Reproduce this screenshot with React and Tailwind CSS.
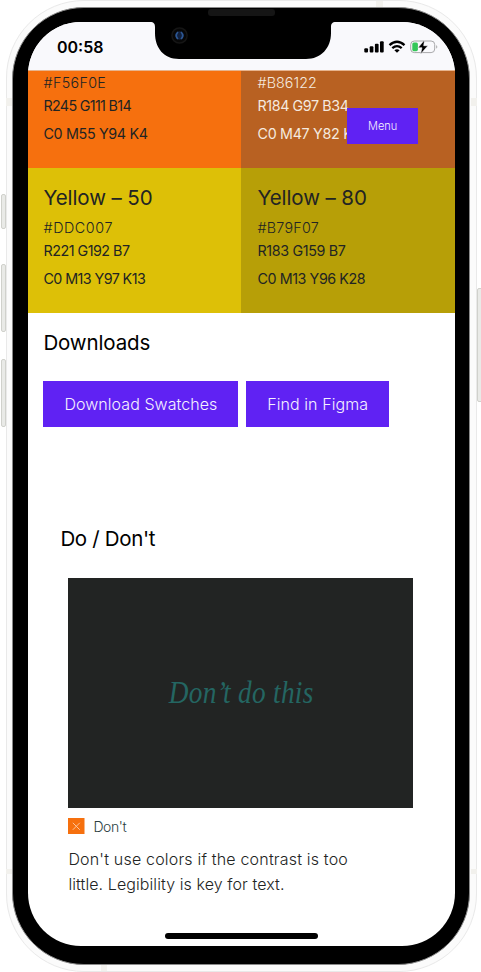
import { useLayoutEffect, useRef } from "react";

// Single line of text whose tracking is adjusted to fill a given width.
function Line({ w, className = "", children }) {
  const ref = useRef(null);
  useLayoutEffect(() => {
    const el = ref.current;
    el.style.letterSpacing = "0px";
    const natural = el.offsetWidth;
    el.style.letterSpacing = `${(w - natural) / (children.length - 1 || 1)}px`;
  }, [w, children]);
  return (
    <div className={`flex items-center whitespace-pre ${className}`}>
      <span ref={ref}>{children}</span>
    </div>
  );
}

function Swatch({ title, hex, rgb, cmyk, className }) {
  return (
    <div className={`flex flex-col overflow-hidden ${className}`}>
      {title && (
        <Line w={title[1]} className="mt-[18px] h-6 text-[20.5px]">
          {title[0]}
        </Line>
      )}
      <Line w={hex[1]} className={`h-5 text-[14.3px] font-light ${title ? "mt-2" : "mt-[2px]"}`}>
        {hex[0]}
      </Line>
      <Line w={rgb[1]} className="mt-[3px] h-5 text-[14.3px]">
        {rgb[0]}
      </Line>
      <Line w={cmyk[1]} className="mt-2 h-5 text-[14.3px]">
        {cmyk[0]}
      </Line>
    </div>
  );
}

function StatusBar() {
  return (
    <div className="relative flex h-12 w-full shrink-0 items-center bg-[#f9f9fc] text-black">
      <Line w={47} className="ml-[29px] mt-[1px] h-6 text-[16px] font-semibold">
        00:58
      </Line>
      <svg className="absolute left-[122px] top-0" width="186" height="38" viewBox="0 0 186 38">
        <path d="M0 0C4 0 5 2 5 5V11C5 26 14 37 29 37H156C171 37 181 26 181 11V5C181 2 182 0 186 0Z" fill="#000" />
        <circle cx="29.5" cy="13.5" r="7.6" fill="#070707" stroke="#151515" strokeWidth="1.5" />
        <circle cx="29.5" cy="13.5" r="4.2" fill="#11203d" />
        <path d="M28 10Q24.5 13.5 28 17M31 10Q34.5 13.5 31 17" stroke="#2d5793" strokeWidth="1.6" fill="none" />
      </svg>
      <svg className="ml-auto mr-[16px] mt-[1px]" width="75" height="16" viewBox="0 0 75 16">
        <g fill="#000">
          <rect x="0.3" y="9.3" width="3.7" height="4.3" rx="1" />
          <rect x="5.7" y="7.2" width="3.7" height="6.4" rx="1" />
          <rect x="10.9" y="4.8" width="3.7" height="8.8" rx="1" />
          <rect x="16" y="2.2" width="3.7" height="11.4" rx="1" />
        </g>
        <g fill="none" stroke="#000" strokeWidth="2.3">
          <path d="M25.5 6.2Q33 -0.6 40.5 6.2" />
          <path d="M28.3 9.2Q33 5 37.7 9.2" />
        </g>
        <path d="M30.4 11.2Q33 9.2 35.6 11.2L33 13.7Z" fill="#000" />
        <rect x="46.7" y="2" width="24" height="11.6" rx="3.6" fill="none" stroke="#a8a8aa" />
        <path d="M72.2 5.9Q74.5 7.8 72.2 9.7Z" fill="#a8a8aa" />
        <rect x="48.3" y="3.5" width="5.6" height="8.7" rx="1.6" fill="#34c759" />
        <path d="M60.6 0.8L54 8.8H58L56.5 15.2L63.9 6.7H59.7Z" fill="#000" stroke="#f9f9fc" strokeWidth="0.6" />
      </svg>
    </div>
  );
}

function Screen() {
  return (
    <div className="relative flex h-[924px] w-[427px] flex-col overflow-hidden rounded-[53px] bg-white text-[#222423]">
      <StatusBar />
      <div className="grid shrink-0 grid-cols-[213px_214px] grid-rows-[97px_145px] border-t border-[#e7b48e] bg-[#f6700e]">
        <Swatch
          className="bg-[#f6700e] pl-[15.5px]"
          hex={["#F56F0E", 62]}
          rgb={["R245 G111 B14", 88]}
          cmyk={["C0 M55 Y94 K4", 104]}
        />
        <Swatch
          className="bg-[#b86122] pl-[16.5px] text-[#f5e9df]"
          hex={["#B86122", 59.5]}
          rgb={["R184 G97 B34", 91.5]}
          cmyk={["C0 M47 Y82 K12", 109]}
        />
        <Swatch
          className="bg-[#ddc007] pl-[15.5px]"
          title={["Yellow – 50", 109]}
          hex={["#DDC007", 68.5]}
          rgb={["R221 G192 B7", 86.5]}
          cmyk={["C0 M13 Y97 K13", 102.5]}
        />
        <Swatch
          className="bg-[#b79f07] pl-[16.5px]"
          title={["Yellow – 80", 109]}
          hex={["#B79F07", 61.5]}
          rgb={["R183 G159 B7", 88]}
          cmyk={["C0 M13 Y96 K28", 108.5]}
        />
      </div>
      <div className="flex flex-col pl-[15.4px]">
        <Line w={107} className="mt-[16px] h-7 text-[20.5px] text-black">
          Downloads
        </Line>
        <div className="mt-[24.4px] flex gap-2 font-light text-[#f5f1ff]">
          <button className="flex h-[45.6px] w-[195px] items-center justify-center bg-[#6022f3]">
            <Line w={153} className="text-[16px]">Download Swatches</Line>
          </button>
          <button className="flex h-[45.6px] w-[142.5px] items-center justify-center bg-[#6022f3]">
            <Line w={101} className="text-[16px]">Find in Figma</Line>
          </button>
        </div>
      </div>
      <div className="mt-[98px] flex flex-col pl-[40.4px]">
        <Line w={95} className="-ml-2 h-7 text-[20.5px] text-black">
          Do / Don't
        </Line>
        <div className="mt-[25px] flex h-[230.4px] w-[345px] items-center justify-center bg-[#222423] pt-[1px]">
          <Line w={164} className="scale-x-[0.88] font-['Liberation_Serif',serif] text-[31px] italic text-[#246662]">
            Don’t do this
          </Line>
        </div>
        <div className="mt-[9.6px] flex items-center gap-[8.5px]">
          <svg width="16.5" height="16.5" viewBox="0 0 16.5 16.5">
            <rect width="16.5" height="16.5" fill="#f6700e" />
            <path d="M4.8 4.8L11.8 11.8M11.8 4.8L4.8 11.8" stroke="#fbc59e" strokeWidth="1" />
          </svg>
          <Line w={33.5} className="h-[16.5px] text-[14px] font-light text-[#2b3e3f]">Don't</Line>
        </div>
        <Line w={279} className="mt-[12px] h-[25px] text-[16px] font-light">
          Don't use colors if the contrast is too
        </Line>
        <Line w={216} className="h-[25px] text-[16px] font-light">
          little. Legibility is key for text.
        </Line>
      </div>
      <button className="absolute left-[319.4px] top-[86px] flex h-9 w-[70.5px] items-center justify-center bg-[#6022f3] font-light text-[#f5f1ff]">
        <Line w={29} className="text-[11px]">Menu</Line>
      </button>
      <div className="absolute bottom-[7.5px] left-[136.5px] h-[5.5px] w-[153px] rounded-full bg-black" />
    </div>
  );
}

export default function App() {
  return (
    <div className="relative flex h-[972px] w-[481px] overflow-hidden bg-white pl-1.5 font-[Inter,sans-serif]">
      <div className="absolute left-px top-[194px] h-[35px] w-[5px] rounded-[2px] border border-[#d0d1cc] bg-[#e9eae7]" />
      <div className="absolute left-px top-[264px] h-[68px] w-[5px] rounded-[2px] border border-[#d0d1cc] bg-[#e9eae7]" />
      <div className="absolute left-px top-[359px] h-[68px] w-[5px] rounded-[2px] border border-[#d0d1cc] bg-[#e9eae7]" />
      <div className="absolute left-[476.5px] top-[288px] h-[114px] w-[6px] rounded-[2px] border border-[#d0d1cc] bg-[#e9eae7]" />
      <div className="relative h-[972px] w-[471px] rounded-[78px] border border-[#e9e9e9] bg-[#fbfbfb] pl-[5px] pt-[6px]">
        <div className="absolute -left-px top-[97px] h-2 w-1.5 bg-[#f2f1ed]" />
        <div className="absolute -right-px top-[97px] h-2 w-1.5 bg-[#f2f1ed]" />
        <div className="absolute -left-px top-[868px] h-[5px] w-1.5 bg-[#f2f1ed]" />
        <div className="absolute -right-px top-[868px] h-[5px] w-1.5 bg-[#f2f1ed]" />
        <div className="absolute left-[369px] top-0 h-1.5 w-[7px] bg-[#f2f1ed]" />
        <div className="absolute bottom-0 left-[94px] h-1.5 w-[6px] bg-[#f2f1ed]" />
        <div className="relative h-[958px] w-[458px] rounded-[72px] border border-[#8a8a8a] bg-black pl-[15px] pt-[14px]">
          <div className="absolute left-[195px] top-[1px] h-[7px] w-[67px] rounded-[3px] bg-[#151515]" />
          <Screen />
        </div>
      </div>
    </div>
  );
}
